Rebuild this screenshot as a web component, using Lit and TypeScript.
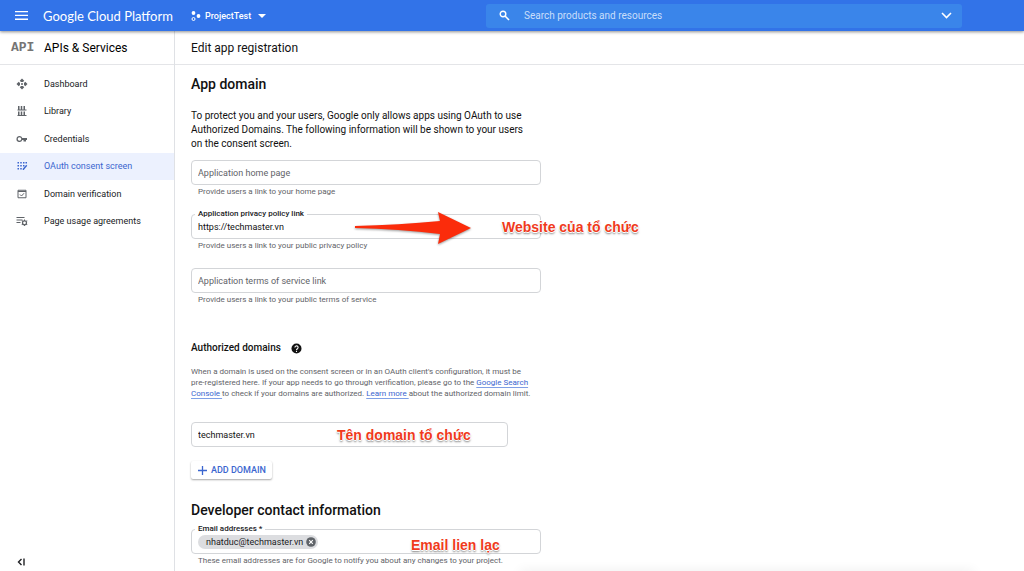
import { LitElement, html, css, svg, nothing } from "lit";
import { customElement, property } from "lit/decorators.js";
import { classMap } from "lit/directives/class-map.js";

const icons = {
  dashboard: svg`<path d="M12 1l4.500 4.500L14 8h-4L7.500 5.500zM12 23l4.500-4.500L14 16h-4l-2.500 2.500zM1 12l4.500-4.500L8 10v4l-2.500 2.500zM23 12l-4.500-4.500L16 10v4l2.500 2.500z"/><circle cx="12" cy="12" r="2"/>`,
  library: svg`<path d="M4 2h3v7h2.500V2h3v7H15V2h3v7h3v2H3V9h1zM4 13h3v7h2.500v-7h3v7H15v-7h3v7h3v2H3v-2h1z"/>`,
  credentials: svg`<path fill-rule="evenodd" d="M7 6a6 6 0 1 0 5.600 8H15v3h5v-3h2v-4h-9.400A6 6 0 0 0 7 6zm0 2.400a3.600 3.600 0 1 1 0 7.200 3.600 3.600 0 0 1 0-7.200z"/>`,
  consent: svg`<path d="M3 4h3v3H3zM8.500 4h3v3h-3zM14 4h3v3h-3zM19 4h3v3h-3zM3 10h3v3H3zM8.500 10h3v3h-3zM14 10h3v3h-3zM3 16h3v3H3zM8.500 16h3v3h-3z"/><path d="M20.500 9.500l2 2-7 8.500h-2v-2.500z"/>`,
  verify: svg`<path d="M4 4.500h16v15H4zM4 7h16" fill="none" stroke="currentColor" stroke-width="2"/><path d="M8 13l3 3 5-5.500" fill="none" stroke="currentColor" stroke-width="2"/>`,
  agreements: svg`<path d="M1 4h16v2H1zM1 9h12v2H1zM1 14h8v2H1z"/><circle cx="17" cy="15.500" r="4" fill="none" stroke="currentColor" stroke-width="2.500"/><path d="M16 9h2v3h-2zM16 19h2v3h-2zM11 12l1-1.500 3 1.500-1 1.500zM20 19l1-1.500 2 1.500-1 1.500zM20 12l2-1.500 1 1.500-2 1.500zM11 19l2-1.500 1 1.500-2 1.500z"/>`,
};

const navItems = [
  { label: "Dashboard", icon: icons.dashboard },
  { label: "Library", icon: icons.library },
  { label: "Credentials", icon: icons.credentials },
  { label: "OAuth consent screen", icon: icons.consent, active: true },
  { label: "Domain verification", icon: icons.verify },
  { label: "Page usage agreements", icon: icons.agreements },
];

@customElement("top-bar")
class TopBar extends LitElement {
  static styles = css`
    :host {
      display: grid;
      grid-template-columns: 486px minmax(0, 1fr) 62px;
      align-items: center;
      height: 31px;
      background: #3273e8;
      color: #fff;
      box-shadow: 0 1px 3px rgba(0, 0, 0, 0.45);
      position: relative;
      font-family: Roboto, sans-serif;
    }
    button { border: 0; background: none; color: inherit; padding: 0; font: inherit; display: flex; align-items: center; }
    svg { display: block; fill: currentColor; }
    .left { display: flex; align-items: center; padding-left: 15px; }
    .brand { margin-left: 15px; width: 133px; color: #fff; text-decoration: none; font: 13px/20px Lato, sans-serif; white-space: nowrap; }
    .project { margin-left: 15px; font-size: 9px; font-weight: 500; gap: 4px; }
    .caret { margin-left: 3px; }
    .search { display: flex; align-items: center; height: 24px; border-radius: 3px; background: #3a85ea; padding: 0 10px 0 13px; }
    .search input { flex: 1; min-width: 0; border: 0; outline: 0; padding: 0; margin-left: 14px; background: none; color: #fff; font: 10px/16px Roboto, sans-serif; }
    .search input::placeholder { color: #c9defa; opacity: 1; }
  `;
  render() {
    return html`
      <div class="left">
        <button aria-label="Navigation menu">
          <svg width="13" height="9" viewBox="0 0 13 9"><path d="M0 0h13v1.300H0zM0 3.800h13v1.300H0zM0 7.600h13v1.300H0z" /></svg>
        </button>
        <a class="brand" href="#">Google Cloud Platform</a>
        <button class="project">
          <svg width="10" height="10" viewBox="0 0 10 10"><circle cx="2.500" cy="2" r="1.900" /><circle cx="7.500" cy="5" r="1.900" /><circle cx="2.500" cy="8" r="1.500" fill="none" stroke="currentColor" /></svg>
          ProjectTest
          <svg class="caret" width="8" height="4" viewBox="0 0 8 4"><path d="M0 0h8L4 4z" /></svg>
        </button>
      </div>
      <div class="search">
        <svg width="11" height="11" viewBox="0 0 11 11"><circle cx="4" cy="4" r="2.800" fill="none" stroke="currentColor" stroke-width="1.400" /><path d="M6 6l4 4" stroke="currentColor" stroke-width="1.600" /></svg>
        <input type="search" aria-label="Search products and resources" placeholder="Search products and resources" />
        <button aria-label="Expand search">
          <svg width="11" height="7" viewBox="0 0 11 7"><path d="M1 1l4.500 4.500L10 1" fill="none" stroke="currentColor" stroke-width="1.600" /></svg>
        </button>
      </div>
    `;
  }
}

@customElement("side-nav")
class SideNav extends LitElement {
  static styles = css`
    :host { display: flex; flex-direction: column; border-right: 1px solid #dfe1e5; color: #202124; font-family: Roboto, sans-serif; }
    .title { display: flex; align-items: center; height: 33px; border-bottom: 1px solid #e4e5e8; padding-left: 11px; color: #000; }
    .api { width: 33px; font: bold 13px/16px "Liberation Mono", monospace; color: #757575; }
    .title h1 { margin: 0; font: 400 12px/16px Roboto, sans-serif; }
    ul { list-style: none; margin: 5px 0 0; padding: 0; height: 165px; display: grid; grid-template-rows: repeat(6, 1fr); }
    .item { display: flex; align-items: center; height: 100%; padding-left: 16px; gap: 16px; color: #202124; text-decoration: none; font-size: 9px; }
    .item svg { width: 12px; height: 12px; fill: currentColor; color: #5f6368; }
    .item.active { background: #ecf1fe; color: #3b66cf; }
    .item.active svg { color: #3b66cf; }
    .collapse { margin: auto 0 5px 17px; align-self: flex-start; border: 0; padding: 0; background: none; color: #202124; }
    .collapse svg { display: block; }
  `;
  render() {
    return html`
      <div class="title"><span class="api">API</span><h1>APIs &amp; Services</h1></div>
      <nav>
        <ul>
          ${navItems.map(
            (item) => html`<li>
              <a href="#" class=${classMap({ item: true, active: !!item.active })} aria-current=${item.active ? "page" : nothing}>
                <svg viewBox="0 0 24 24" aria-hidden="true">${item.icon}</svg>${item.label}
              </a>
            </li>`
          )}
        </ul>
      </nav>
      <button class="collapse" aria-label="Collapse menu">
        <svg width="9" height="8" viewBox="0 0 9 8"><path d="M4.500 1L1.500 4l3 3M7 .500v7" fill="none" stroke="currentColor" stroke-width="1.400" /></svg>
      </button>
    `;
  }
}

@customElement("text-field")
class TextField extends LitElement {
  @property() label = "";
  @property() value = "";
  @property() hint = "";
  @property() chip = "";
  @property({ type: Boolean }) floating = false;

  static styles = css`
    :host { display: block; font-family: Roboto, sans-serif; }
    .box { position: relative; display: flex; align-items: center; box-sizing: border-box; height: 25px; padding: 0 6px; border: 1px solid #d3d5d8; border-radius: 4px; }
    input { flex: 1; min-width: 0; height: 100%; box-sizing: border-box; border: 0; outline: 0; padding: 0; background: none; color: #111; font: 9px/12px Roboto, sans-serif; }
    input::placeholder { color: #5f6368; opacity: 1; }
    label { position: absolute; left: 3px; top: -7px; padding: 0 3px; background: #fff; color: #202124; font-size: 8px; line-height: 12px; font-weight: 500; }
    .hint { margin: 2px 0 0 7px; color: #5f6368; font-size: 8px; line-height: 10px; }
    .chip { display: flex; align-items: center; gap: 3px; height: 14px; border-radius: 7px; background: #dcdde0; padding: 0 2px 0 8px; color: #202124; font-size: 9px; }
    .chip button { border: 0; padding: 0; background: none; display: block; }
    .chip svg { display: block; }
  `;
  render() {
    return html`
      <div class="box">
        ${this.floating ? html`<label for="control">${this.label}</label>` : nothing}
        ${this.chip
          ? html`<span class="chip">${this.chip}
              <button aria-label="Remove">
                <svg width="10" height="10" viewBox="0 0 10 10"><circle cx="5" cy="5" r="4.800" fill="#5f6368" /><path d="M3.200 3.200l3.600 3.600M6.800 3.200L3.200 6.800" stroke="#fff" stroke-width="1.100" /></svg>
              </button></span>`
          : nothing}
        <input id="control" type="text" aria-label=${this.label} placeholder=${this.floating ? "" : this.label} .value=${this.value} />
      </div>
      ${this.hint ? html`<div class="hint">${this.hint}</div>` : nothing}
    `;
  }
}

@customElement("app-root")
class AppRoot extends LitElement {
  static styles = css`
    :host { display: flex; flex-direction: column; min-height: 100vh; background: #fff; color: #111; font-family: Roboto, sans-serif; overflow: hidden; position: relative; }
    .body { flex: 1; display: grid; grid-template-columns: 175px minmax(0, 1fr); }
    .page-title { height: 33px; border-bottom: 1px solid #e4e5e8; padding-left: 16px; display: flex; align-items: center; font-size: 12px; color: #111; }
    .form { max-width: 350px; padding: 9px 16px 0; }
    h2 { margin: 0; font-size: 14px; line-height: 20px; font-weight: 500; }
    h3 { margin: 0; font-size: 10px; line-height: 16px; font-weight: 500; display: flex; align-items: center; gap: 10px; }
    h3 svg { display: block; }
    .intro { margin: 15px 0 9px; padding-right: 8px; font-size: 10px; line-height: 14px; }
    .fields { display: grid; gap: 17px; margin-bottom: 35px; }
    .small { margin: 10px 0 23px; font-size: 8px; line-height: 11px; color: #5f6368; }
    .small a { color: #3b66cf; text-decoration: underline 1px #7f9fe6; text-underline-offset: 2px; }
    .keep { white-space: nowrap; }
    .annotated { position: relative; }
    .domain { margin-right: 33px; }
    .add { display: inline-flex; align-items: center; gap: 4px; height: 18px; margin: 14px 0 21px; padding: 0 6px 0 7px; border: 0; border-radius: 2px; background: #fff; color: #3b66cf; font: 500 9px/18px Roboto, sans-serif; box-shadow: 0 1px 2px rgba(0, 0, 0, 0.35); }
    .contact { margin-top: 9px; }
    .note { position: absolute; top: 5px; white-space: nowrap; color: #f03a1c; font: bold 14px/16px "Liberation Sans", sans-serif; text-shadow: 1px 0 #fff, -1px 0 #fff, 0 1px #fff, 0 -1px #fff, 0 2px 2px rgba(0, 0, 0, 0.5); }
    .note-site { left: 311px; }
    .note-domain { left: 146px; }
    .note-mail { left: 220px; top: 8px; }
    .arrow { position: absolute; left: 163px; top: -3px; filter: drop-shadow(0 1px 1px rgba(0, 0, 0, 0.4)); }
    .edge { position: absolute; left: 520px; right: 50px; bottom: -8px; height: 8px; box-shadow: 0 0 12px rgba(0, 0, 0, 0.08); }
  `;
  render() {
    return html`
      <top-bar></top-bar>
      <div class="body">
        <side-nav></side-nav>
        <main>
          <div class="page-title">Edit app registration</div>
          <div class="form">
            <h2>App domain</h2>
            <p class="intro">
              To protect you and your users, Google only allows apps using OAuth to use Authorized Domains. The following
              information will be shown to your users on the consent screen.
            </p>
            <div class="fields">
              <text-field label="Application home page" hint="Provide users a link to your home page"></text-field>
              <div class="annotated">
                <text-field floating label="Application privacy policy link" value="https://techmaster.vn" hint="Provide users a link to your public privacy policy"></text-field>
                <svg class="arrow" width="118" height="34" viewBox="0 0 118 34" aria-hidden="true"><path d="M1 15Q45 14 86 10L84 1L117 17L84 33L86 23Q45 18 1 17z" fill="#fb2c0b" /></svg>
                <span class="note note-site">Website của tổ chức</span>
              </div>
              <text-field label="Application terms of service link" hint="Provide users a link to your public terms of service"></text-field>
            </div>
            <h3>
              Authorized domains
              <svg width="11" height="11" viewBox="0 0 11 11" aria-label="Help"><circle cx="5.500" cy="5.500" r="5" fill="#111" /><path d="M3.900 4.500a1.600 1.600 0 1 1 2.500 1.300c-.6.400-.9.600-.9 1.200M5.500 7.700v1.200" fill="none" stroke="#fff" stroke-width="1.100" /></svg>
            </h3>
            <p class="small">
              When a domain is used on the consent screen or in an OAuth client's configuration, it must be
              <span class="keep">pre-registered</span> here. If your app needs to go through verification, please go to the
              <a href="#">Google Search Console </a>to check if your domains are authorized. <a href="#">Learn more </a>about
              the authorized domain limit.
            </p>
            <div class="annotated">
              <text-field class="domain" label="Authorized domain" value="techmaster.vn"></text-field>
              <span class="note note-domain">Tên domain tổ chức</span>
            </div>
            <button class="add">
              <svg width="9" height="9" viewBox="0 0 9 9" aria-hidden="true"><path d="M4.500 0v9M0 4.500h9" stroke="currentColor" stroke-width="1.300" /></svg>
              ADD DOMAIN
            </button>
            <h2>Developer contact information</h2>
            <div class="annotated contact">
              <text-field floating label="Email addresses *" chip="nhatduc@techmaster.vn" hint="These email addresses are for Google to notify you about any changes to your project."></text-field>
              <span class="note note-mail">Email lien lạc</span>
            </div>
          </div>
        </main>
      </div>
      <div class="edge"></div>
    `;
  }
}
